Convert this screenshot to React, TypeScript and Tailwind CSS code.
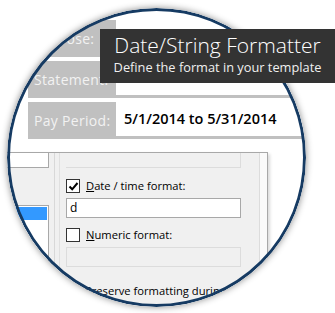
import React from 'react';

const ui = { fontFamily: '"Open Sans", "Noto Sans", sans-serif' };

const Row: React.FC<{ label: string; value?: string }> = ({ label, value }) => (
  <div className="flex h-[37px] mb-[4px]">
    <div className="w-[88px] bg-[#c0c0c0] flex items-center pl-[6px] text-[14px] text-[#f2f2f2] tracking-[0.3px]">
      {label}
    </div>
    <div className="flex-1 flex flex-col">
      <div className="flex-1 bg-white flex items-center pl-[8px] text-[14.5px] font-semibold text-black">{value}</div>
      <div className="h-[3px] bg-[#c0c0c0]" />
    </div>
  </div>
);

const Check: React.FC<{ checked?: boolean }> = ({ checked }) => (
  <div className="w-[14px] h-[14px] border border-[#333] bg-white flex items-center justify-center">
    {checked && (
      <svg width="11" height="11" viewBox="0 0 11 11">
        <path d="M1.5 5.5 L4.2 8.3 L9.5 2" stroke="#000" strokeWidth="2" fill="none" />
      </svg>
    )}
  </div>
);

export default function App() {
  return (
    <div className="relative w-[335px] h-[313px] bg-white overflow-hidden" style={ui}>
      <div className="absolute left-[7px] top-[8px] w-[299px] h-[299px] rounded-full overflow-hidden bg-white shadow-[0_0_7px_rgba(0,0,0,0.45)]">
        <div className="absolute -left-[7px] -top-[8px] w-[335px]">
          <div className="pt-[20px] pl-[28px]">
            <Row label="Purpose:" />
            <Row label="Statement:" />
            <Row label="Pay Period:" value="5/1/2014 to 5/31/2014" />
          </div>

          <div className="mt-[13px] ml-[2px] w-[266px] h-[160px] flex border-t border-r border-[#a8a8a8] bg-[#f0f0f0] shadow-[2px_2px_3px_rgba(0,0,0,0.15)] text-[11.2px] text-black">
            <div className="w-[47px] flex flex-col">
              <div className="h-[15px] bg-white border-r border-b border-[#a8a8a8]" />
              <div className="h-[37px]" />
              <div className="flex-1 bg-white border-t border-r border-[#a8a8a8] pt-[1px]">
                <div className="h-[13px] mr-[1px] bg-[#3399ff]" />
              </div>
            </div>
            <div className="w-[6px] border-r border-[#d8d8d8]" />
            <div className="w-[5px] border-r border-[#e0e0e0]" />
            <div className="w-[188px] pl-[6px] flex flex-col">
              <div className="h-[15px] w-[175px] border-b border-r border-[#dcdcdc] bg-[#f0f0f0]" />
              <div className="mt-[11px] flex items-center gap-[6px] h-[14px]">
                <Check checked />
                <span><span className="underline">D</span>ate / time format:</span>
              </div>
              <div className="mt-[5px] h-[20px] w-[175px] bg-white border border-[#a8a8a8] flex items-center pl-[3px] text-[12px]">d</div>
              <div className="mt-[10px] flex items-center gap-[6px] h-[14px]">
                <Check />
                <span><span className="underline">N</span>umeric format:</span>
              </div>
              <div className="mt-[5px] h-[20px] w-[175px] bg-[#f0f0f0] border border-[#dcdcdc]" />
              <div className="mt-[26px] flex items-center gap-[6px] h-[14px]">
                <Check />
                <span>Preserve formatting during export</span>
              </div>
            </div>
            <div className="w-[12px] border-r border-[#dcdcdc]" />
            <div className="flex-1 bg-[#fafafa]" />
          </div>
        </div>
        <div className="absolute inset-0 rounded-full border-[3px] border-[#163b63]" />
      </div>

      <div className="absolute left-[100px] top-[29px] w-[235px] h-[54px] bg-[#333333] text-white flex flex-col items-center">
        <div className="text-[21px] font-light leading-[27px] mt-[3px]">Date/String Formatter</div>
        <div className="text-[12.8px] leading-[17px] text-[#f0f0f0]">Define the format in your template</div>
      </div>
    </div>
  );
}
